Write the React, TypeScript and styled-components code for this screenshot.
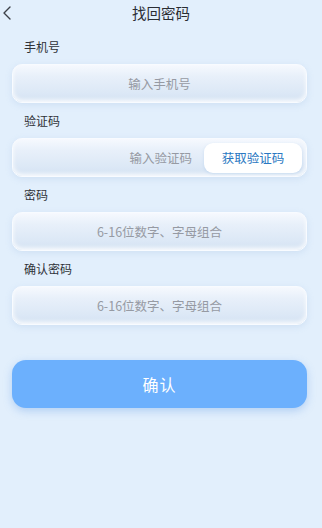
import React from "react";
import styled, { createGlobalStyle } from "styled-components";

const Global = createGlobalStyle`
  html, body { margin: 0; padding: 0; background: #e2effc; }
  body { font-family: "Noto Sans CJK SC", "Noto Sans", sans-serif; }
  * { box-sizing: border-box; }
`;

const Page = styled.div`
  width: 322px;
  height: 528px;
  background: #e2effc;
  display: flex;
  flex-direction: column;
`;

const Header = styled.div`
  height: 26px;
  display: flex;
  align-items: center;
  justify-content: center;
  position: relative;
`;

const Back = styled.button`
  position: absolute;
  left: 1px;
  top: 5px;
  width: 12px;
  height: 16px;
  padding: 0;
  border: none;
  background: transparent;
  display: flex;
  align-items: center;
  justify-content: center;
`;

const Title = styled.h1`
  margin: 0;
  font-size: 14.5px;
  font-weight: 400;
  color: #2a2d33;
  line-height: 26px;
`;

const Form = styled.div`
  display: flex;
  flex-direction: column;
  gap: 9px;
  margin: 12px 15px 0 12px;
`;

const Field = styled.div`
  display: flex;
  flex-direction: column;
  gap: 8px;
`;

const Label = styled.div`
  height: 18px;
  line-height: 18px;
  font-size: 12px;
  color: #2f3238;
  padding-left: 12px;
`;

const Box = styled.div`
  height: 39px;
  border-radius: 10px;
  border: 1.5px solid #f8fbff;
  background: linear-gradient(180deg, #f6f9fe 0%, #e8f0fa 30%, #dce8f6 75%, #d4e2f3 100%);
  box-shadow: inset 0 -2px 4px rgba(255, 255, 255, 0.9), 0 2px 6px rgba(150, 185, 225, 0.25);
  display: flex;
  align-items: center;
  padding: 0 3px;
`;

const Input = styled.input<{ $align?: "center" | "right" }>`
  flex: 1;
  min-width: 0;
  height: 100%;
  border: none;
  outline: none;
  background: transparent;
  font-family: inherit;
  font-size: 12.5px;
  color: #333;
  text-align: ${(p) => p.$align || "center"};
  padding: ${(p) => (p.$align === "right" ? "0 12px 0 0" : "0")};
  &::placeholder { color: #969aa3; }
`;

const CodeButton = styled.button`
  width: 98px;
  height: 30px;
  margin-right: 1px;
  border: none;
  border-radius: 9px;
  background: #ffffff;
  box-shadow: 0 1px 3px rgba(150, 185, 225, 0.35);
  font-family: inherit;
  font-size: 12.5px;
  color: #2a78c2;
  padding: 0;
`;

const Submit = styled.button`
  margin: 35px 15px 0 12px;
  height: 48px;
  border: none;
  border-radius: 14px;
  background: #6cb0fd;
  box-shadow: 0 3px 8px rgba(90, 150, 230, 0.35);
  font-family: inherit;
  font-size: 16px;
  color: #ffffff;
  letter-spacing: 1px;
`;

export default function App() {
  return (
    <Page>
      <Global />
      <Header>
        <Back aria-label="back">
          <svg width="10" height="14" viewBox="0 0 10 14">
            <path d="M8 1 L2 7 L8 13" fill="none" stroke="#3c4048" strokeWidth="1.4" strokeLinecap="round" strokeLinejoin="round" />
          </svg>
        </Back>
        <Title>找回密码</Title>
      </Header>
      <Form>
        <Field>
          <Label>手机号</Label>
          <Box>
            <Input placeholder="输入手机号" />
          </Box>
        </Field>
        <Field>
          <Label>验证码</Label>
          <Box>
            <Input $align="right" placeholder="输入验证码" />
            <CodeButton>获取验证码</CodeButton>
          </Box>
        </Field>
        <Field>
          <Label>密码</Label>
          <Box>
            <Input type="password" placeholder="6-16位数字、字母组合" />
          </Box>
        </Field>
        <Field>
          <Label>确认密码</Label>
          <Box>
            <Input type="password" placeholder="6-16位数字、字母组合" />
          </Box>
        </Field>
      </Form>
      <Submit>确认</Submit>
    </Page>
  );
}
